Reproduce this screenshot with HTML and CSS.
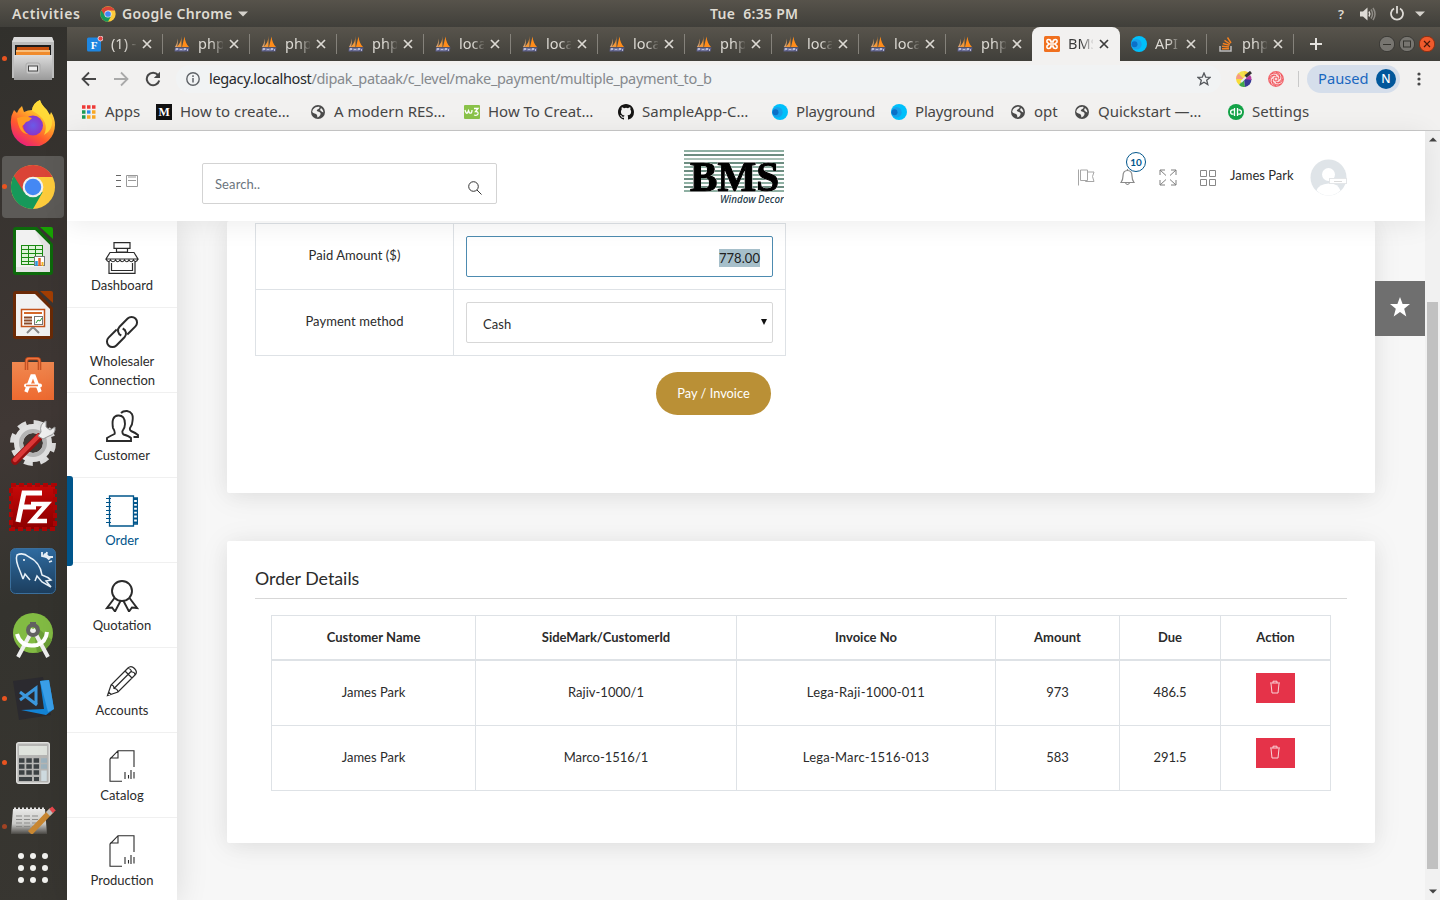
FILE: index.html
```html
<!DOCTYPE html>
<html lang="en">
<head>
<meta charset="utf-8">
<title>BMS Window Decor</title>
<link rel="stylesheet" href="styles.css">
</head>
<body>
<svg class="defs" width="0" height="0">
  <defs>
    <linearGradient id="gGray" x1="0" y1="0" x2="0" y2="1"><stop offset="0" stop-color="#dcdcdc"/><stop offset="1" stop-color="#9a9a9a"/></linearGradient>
    <linearGradient id="gFox" x1=".8" y1="0" x2=".2" y2="1"><stop offset="0" stop-color="#fff14a"/><stop offset=".35" stop-color="#ffb02a"/><stop offset=".65" stop-color="#ff5a2c"/><stop offset="1" stop-color="#e5148a"/></linearGradient>
    <radialGradient id="gGlobe"><stop offset="0" stop-color="#6a5be8"/><stop offset="1" stop-color="#8a35c8"/></radialGradient>
    <linearGradient id="gBag" x1="0" y1="0" x2="0" y2="1"><stop offset="0" stop-color="#f08850"/><stop offset="1" stop-color="#ee6a30"/></linearGradient>
    <linearGradient id="gRed" x1="0" y1="0" x2="0" y2="1"><stop offset="0" stop-color="#c80808"/><stop offset="1" stop-color="#8c0000"/></linearGradient>
    <linearGradient id="gSql" x1="0" y1="0" x2="0" y2="1"><stop offset="0" stop-color="#2f6ba0"/><stop offset="1" stop-color="#1c3e5e"/></linearGradient>
    <linearGradient id="gFade" x1="0" y1="0" x2="0" y2="1"><stop offset="0" stop-color="#e8e8e6"/><stop offset=".6" stop-color="#c8c8c6"/><stop offset="1" stop-color="#4a4844"/></linearGradient>
  </defs>
  <symbol id="sails" viewBox="0 0 16 16">
    <path d="M7.500 0 C7.500 4 6 8 2.500 11 H7.500 Z" fill="#f0973a"/><path d="M3.500 2.500 C3.500 6 2.500 9 .8 11 H3 C4 8 4 5 3.500 2.500Z" fill="#d9a06a"/>
    <path d="M10.500 .5 L8 11 H15 C12.500 8.500 11 5 10.500 .5Z" fill="#ff8c1a"/>
    <path d="M1 11.500 H15.500 L14.500 15.500 H.5Z" fill="#5c5f8c"/><path d="M2 14.500 V12.500 H4 V13.500 H2 M6 12.500 V14.500 M8 12.500 V14.500 M6 13.500 H8 M10 14.500 V12.500 H12 V13.500 H10 M13.500 15 V13" fill="none" stroke="#c9cbe0" stroke-width=".8"/>
  </symbol>
  <symbol id="chrome" viewBox="0 0 48 48">
    <circle cx="24" cy="24" r="23" fill="#fdcb3c"/>
    <path d="M24 24 L4 12.600 A23 23 0 0 0 24 47 L34 29.500Z" fill="#16995a"/>
    <path d="M4 12.600 A23 23 0 0 1 44.300 13.500 H24 A10.500 10.500 0 0 0 14 21 L14.500 29.500Z" fill="#da4437"/>
    <circle cx="24" cy="24" r="10.800" fill="#f1f1f1"/><circle cx="24" cy="24" r="8.600" fill="#4488f4"/>
  </symbol>
  <symbol id="x" viewBox="0 0 10 10"><path d="M1 1 9 9 M9 1 1 9" fill="none" stroke="currentColor" stroke-width="1.700"/></symbol>
  <symbol id="globe" viewBox="0 0 16 16"><circle cx="8" cy="8" r="7" fill="#4b4b4b"/><path d="M3 5.500 C5 3 8 2.500 9.500 3 C10 4.500 8 5 7 6 C6 7.500 9.500 7.500 10.500 9 C11 11 9 13 7.500 13.500 C7 12 7.500 11 6 10 C4 9 2.500 9 2.200 7.500Z M11 4 C12.500 5 13.500 7 13.300 8.500 C12 8 11 7 10 6Z" fill="#f2f1f0"/></symbol>
  <symbol id="play" viewBox="0 0 16 16"><circle cx="8" cy="8" r="8" fill="#00c0fb"/><circle cx="5.500" cy="8.300" r="5.200" fill="#18a0ea"/><circle cx="3.500" cy="8.300" r="3" fill="#0b70c8"/></symbol>
  <symbol id="doc" viewBox="0 0 32 32"><path d="M28 17 V.7 H12 L4 9 V31.300 H16 M12 .7 V8 H4 M19 22 V29 M22.500 25 V28.500 M25 20 V29 M28 22 V28.500" fill="none" stroke="currentColor" stroke-width="1.100"/></symbol>
  <symbol id="trash" viewBox="0 0 12 14"><path d="M1 3 H11 M4 3 V1.200 H8 V3 M2 3.500 L3 13 H9 L10 3.500" fill="none" stroke="#f9d3d8" stroke-width="1"/></symbol>
</svg>

<header class="topbar">
  <span class="activities">Activities</span>
  <svg class="tb-chrome" width="16" height="16"><use href="#chrome"/></svg>
  <span class="appname">Google Chrome</span>
  <svg class="caret" width="10" height="6"><path d="M0 .5H10L5 5.500Z" fill="#d5d2cc"/></svg>
  <span class="clock">Tue&nbsp; 6:35 PM</span>
  <div class="tray">
    <span class="tray-help">?</span>
    <svg width="16" height="14" viewBox="0 0 16 14"><path d="M0 4.500H3L7.500 .5V13.500L3 9.500H0Z" fill="#dedbd6"/><path d="M9 4.500Q10.500 7 9 9.500" stroke="#dedbd6" stroke-width="1.500" fill="none"/><path d="M11 2.500Q14 7 11 11.500M13 1Q17 7 13 13" stroke="#8f8c86" stroke-width="1.500" fill="none"/></svg>
    <svg width="14" height="15" viewBox="0 0 14 15"><path d="M4 2.500A6 6 0 1 0 10 2.500M7 0V7.500" stroke="#dedbd6" stroke-width="1.800" fill="none"/></svg>
    <svg width="10" height="6"><path d="M0 .5H10L5 5.500Z" fill="#d5d2cc"/></svg>
  </div>
</header>

<div class="desktop">
<nav class="dock">
  <div class="dk run"><svg width="42" height="44" viewBox="0 0 42 44"><path d="M2 0H40L42 5V41H0V5Z" fill="#bdbdbd"/><path d="M2 0H40L42 5H0Z" fill="#dadada"/><rect x="3" y="8" width="36" height="11" fill="#1d1d1d"/><path d="M5 10H37V19H4Z" fill="#c8500d"/><path d="M4 13H38V19H4Z" fill="#f08b2c"/><path d="M4 14H38" stroke="#fff0c8"/><rect x="2" y="18" width="38" height="25" fill="url(#gGray)"/><rect x="14" y="26" width="14" height="11" rx="2" fill="#c9c9c9" stroke="#aaa"/><rect x="16.500" y="29" width="9" height="5" fill="#eee" stroke="#444"/></svg></div>
  <div class="dk"><svg width="46" height="46" viewBox="0 0 46 46"><path d="M4 10L7 13Q8 9 12 6L14 12Q18 10 22 10Q23 3 30 0Q31 4 36 9L40 15L41 12Q45 18 45 25A22 22 0 0 1 1 25Q0 17 4 10Z" fill="url(#gFox)"/><path d="M30 0Q31 5 37 10L42 20Q43 30 34 35Q40 22 26 13Q21 10 22 10Q23 3 30 0Z" fill="#ffdd38" opacity=".85"/><circle cx="23" cy="25.500" r="10" fill="url(#gGlobe)"/><path d="M7 18Q15 15 22 18Q20 21 16 22Q14 25 12 26Q13 31 18 34Q9 34 7 18Z" fill="#ff9b22"/></svg></div>
  <div class="dk run active"><svg width="46" height="46"><use href="#chrome"/></svg></div>
  <div class="dk"><svg width="40" height="48" viewBox="0 0 40 48"><path d="M3 0H24L40 17V45Q40 48 37 48H3Q0 48 0 45V3Q0 0 3 0Z" fill="#0d6a0b"/><path d="M27 0H38Q40 0 40 2V12Z" fill="#18a303"/><path d="M3 3H22L37 18V45H3Z" fill="#f1f1f1"/><path d="M22 3L37 18V45H3V40H30V20Z" fill="#dcdcdc" opacity=".6"/><rect x="8.500" y="18.500" width="21" height="19" fill="#dff3da" stroke="#1a8a12"/><path d="M8 22.500H30M8 26.500H30M8 30.500H30M8 34.500H30M15.500 18V38M22.500 18V38" stroke="#1a8a12"/><rect x="21.500" y="29.500" width="10" height="9" fill="#fff" stroke="#777"/><path d="M23.500 34V39" stroke="#2d96d8" stroke-width="2.500"/><path d="M26.500 31V39" stroke="#e8622a" stroke-width="2.500"/><path d="M29.500 35V39" stroke="#f3b52a" stroke-width="2"/></svg></div>
  <div class="dk"><svg width="40" height="48" viewBox="0 0 40 48"><path d="M3 0H24L40 17V45Q40 48 37 48H3Q0 48 0 45V3Q0 0 3 0Z" fill="#6b2a06"/><path d="M27 0H38Q40 0 40 2V12Z" fill="#a33e03"/><path d="M3 3H22L37 18V45H3Z" fill="#f1f1f1"/><rect x="8.500" y="18.500" width="23" height="17" fill="#fff" stroke="#c2521a" stroke-width="1.500"/><path d="M11 22H29" stroke="#d4682a" stroke-width="2"/><path d="M11 26.500H19M11 29.500H19M11 32.500H19" stroke="#8a4a2a" stroke-width="2"/><rect x="21.500" y="25.500" width="8" height="8" fill="#fff" stroke="#777"/><path d="M23 32L25 29L27 30L29 27" fill="none" stroke="#2b9b35"/><path d="M14 42L19 37H21L26 42" fill="none" stroke="#888" stroke-width="2"/></svg></div>
  <div class="dk"><svg width="42" height="44" viewBox="0 0 42 44"><rect x="0" y="5" width="42" height="38" fill="url(#gBag)"/><path d="M14.500 13V4Q14.500 1.500 17 1.500H25Q27.500 1.500 27.500 4V13" fill="none" stroke="#b8491b" stroke-width="3.500"/><path d="M14.500 13V4Q14.500 1.500 17 1.500H25Q27.500 1.500 27.500 4V13" fill="none" stroke="#ee7440" stroke-width="1.500"/><path d="M14 35L20 19H22L28 35" fill="none" stroke="#fff" stroke-width="3.600"/><rect x="12" y="26.500" width="18" height="4" rx="2" fill="#fff"/><path d="M14 28.500H26" stroke="#f07a40" stroke-width="1.600"/></svg></div>
  <div class="dk"><svg width="46" height="46" viewBox="0 0 46 46"><circle cx="23" cy="23" r="20" fill="none" stroke="#dcdcdc" stroke-width="6" stroke-dasharray="8.500 7.210"/><circle cx="23" cy="23" r="14.500" fill="none" stroke="#e0e0e0" stroke-width="9"/><circle cx="23" cy="23" r="12" fill="none" stroke="#b4b4b4" stroke-width="4"/><path d="M5 41L29 17" stroke="#941010" stroke-width="7.500" stroke-linecap="round"/><path d="M5 40L28 16.500" stroke="#dc3838" stroke-width="4.500" stroke-linecap="round"/><path d="M28 16L31 12Q29 4 36 1L36 7L40 10L45 7Q46 14 39 16L33 19Z" fill="#f0f0f0" stroke="#999"/></svg></div>
  <div class="dk"><svg width="48" height="48" viewBox="0 0 48 48"><rect x="2" y="2" width="44" height="44" fill="url(#gRed)" stroke="#ae0505" stroke-width="4" stroke-dasharray="5 3"/><path d="M9 39L15 10H33M12 24H27" fill="none" stroke="#fff" stroke-width="5"/><path d="M22 21H38L23 38H38" fill="none" stroke="#fff" stroke-width="4.500"/></svg></div>
  <div class="dk"><svg width="46" height="46" viewBox="0 0 46 46"><rect x=".5" y=".5" width="45" height="45" rx="5" fill="url(#gSql)" stroke="#3b6f9c"/><path d="M13 31L10 23Q5 12 7 7Q13 4 19 9Q30 14 32 27Q38 29 41 32L36 33L41 39L32 34L27 28L25 33M13 31L15 26L20 32" fill="none" stroke="#e8f1f8" stroke-width="1.500"/><circle cx="14" cy="12" r="1" fill="#fff"/><path d="M34 6L40 11" stroke="#e8f1f8" stroke-width="3.500"/><path d="M32 4V8L36 9L37 4M38 9L43 9M39 14L42 13" stroke="#e8f1f8" stroke-width="1.800" fill="none"/></svg></div>
  <div class="dk"><svg width="42" height="46" viewBox="0 0 42 46"><circle cx="21" cy="21" r="20" fill="#82bb43"/><path d="M21 12L40 28A20 20 0 0 1 25 41Z" fill="#6b9f36"/><path d="M21 17L6 45M21 17L36 45" stroke="#eee" stroke-width="4"/><path d="M5 22Q9 36 25 33Q34 30 35 20" fill="none" stroke="#fff" stroke-width="4"/><circle cx="21" cy="18" r="5" fill="none" stroke="#616161" stroke-width="4"/><path d="M18 10H24V13H18Z" fill="#616161"/></svg></div>
  <div class="dk run"><svg width="42" height="46" viewBox="0 0 42 46"><path d="M1 5L31 1L39 39L7 44Z" fill="#2b2a2f"/><path d="M28 5L37 4L42 33L34 39L9 34L32 33Z" fill="#1384d6"/><path d="M28 5L37 4L42 33L36 36Z" fill="#3aa0ea"/><path d="M8 16L25 29M8 24L24 12V28" fill="none" stroke="#3b97dd" stroke-width="3"/></svg></div>
  <div class="dk run"><svg width="34" height="42" viewBox="0 0 34 42"><rect x=".7" y=".7" width="32.600" height="40.600" rx="2" fill="#b6b6b4" stroke="#e1e1df" stroke-width="1.400"/><rect x="3" y="4" width="28" height="9" fill="#dfe3dd"/><path d="M3 18.500H24M3 24.500H24M3 30.500H24" stroke="#3d4244" stroke-width="4.500" stroke-dasharray="5.500 1.800"/><path d="M3 37H16M18 37H23" stroke="#3d4244" stroke-width="4"/><path d="M25 18.500H31M25 24.500H31" stroke="#9db2bd" stroke-width="4.500"/><path d="M28 28.500V39" stroke="#cfdbe0" stroke-width="5.500"/></svg></div>
  <div class="dk run half"><svg width="46" height="28" viewBox="0 0 46 28"><path d="M3 3H35L37 28H1Z" fill="url(#gFade)"/><path d="M5 5V1.500M9 5V1.500M13 5V1.500M17 5V1.500M21 5V1.500M25 5V1.500M29 5V1.500M33 5V1.500" stroke="#e6e6e6" stroke-width="2"/><path d="M6 10H30M6 13.500H30M6 17H28M6 20.500H25" stroke="#8b8b89" stroke-dasharray="6 2"/><path d="M20 27L41 5" stroke="#c88732" stroke-width="5.500"/><path d="M38 8L42 4" stroke="#c0c0c0" stroke-width="5.500"/><path d="M41 5L44 2.500" stroke="#e9484d" stroke-width="5.500"/></svg></div>
  <div class="apps"><i></i><i></i><i></i><i></i><i></i><i></i><i></i><i></i><i></i></div>
</nav>

<section class="browser">
  <div class="tabs">
    <div class="tab"><svg width="16" height="16" viewBox="0 0 16 16"><rect x="0" y="1.500" width="14" height="14" rx="1.500" fill="#1e86e0"/><circle cx="13.500" cy="2.500" r="2.500" fill="#e64545" stroke="#fff" stroke-width=".7"/><text class="f-letter" x="3.800" y="12.500">F</text></svg><span>(1) -</span><svg class="tx" width="10" height="10"><use href="#x"/></svg></div>
    <div class="tab"><svg width="16" height="16"><use href="#sails"/></svg><span>php</span><svg class="tx" width="10" height="10"><use href="#x"/></svg></div>
    <div class="tab"><svg width="16" height="16"><use href="#sails"/></svg><span>php</span><svg class="tx" width="10" height="10"><use href="#x"/></svg></div>
    <div class="tab"><svg width="16" height="16"><use href="#sails"/></svg><span>php</span><svg class="tx" width="10" height="10"><use href="#x"/></svg></div>
    <div class="tab"><svg width="16" height="16"><use href="#sails"/></svg><span>loca</span><svg class="tx" width="10" height="10"><use href="#x"/></svg></div>
    <div class="tab"><svg width="16" height="16"><use href="#sails"/></svg><span>loca</span><svg class="tx" width="10" height="10"><use href="#x"/></svg></div>
    <div class="tab"><svg width="16" height="16"><use href="#sails"/></svg><span>loca</span><svg class="tx" width="10" height="10"><use href="#x"/></svg></div>
    <div class="tab"><svg width="16" height="16"><use href="#sails"/></svg><span>php</span><svg class="tx" width="10" height="10"><use href="#x"/></svg></div>
    <div class="tab"><svg width="16" height="16"><use href="#sails"/></svg><span>loca</span><svg class="tx" width="10" height="10"><use href="#x"/></svg></div>
    <div class="tab"><svg width="16" height="16"><use href="#sails"/></svg><span>loca</span><svg class="tx" width="10" height="10"><use href="#x"/></svg></div>
    <div class="tab nosep"><svg width="16" height="16"><use href="#sails"/></svg><span>php</span><svg class="tx" width="10" height="10"><use href="#x"/></svg></div>
    <div class="tab on"><svg width="16" height="16" viewBox="0 0 16 16"><rect width="16" height="16" rx="1.500" fill="#f0701f"/><path d="M4.500 3.500Q2.500 3.500 3 6L5 8L3 10Q2.500 12.500 4.500 12.500Q7 12.500 7 10H9Q9 12.500 11.500 12.500Q13.500 12.500 13 10L11 8L13 6Q13.500 3.500 11.500 3.500Q9 3.500 9 6H7Q7 3.500 4.500 3.500ZM5.500 8H10.500" fill="none" stroke="#fff" stroke-width="1.600"/></svg><span>BMS</span><svg class="tx" width="10" height="10"><use href="#x"/></svg></div>
    <div class="tab"><svg width="16" height="16"><use href="#play"/></svg><span>API</span><svg class="tx" width="10" height="10"><use href="#x"/></svg></div>
    <div class="tab"><svg width="16" height="16" viewBox="0 0 16 16"><path d="M2 10V15H13V10" fill="none" stroke="#bcbbbb" stroke-width="1.500"/><path d="M4 12.700H11M4 10.300L11 11M4.800 7.500L11.500 9.300M6.500 4.300L12 8M9.500 1.500L13 7" stroke="#f4801f" stroke-width="1.400"/></svg><span>php</span><svg class="tx" width="10" height="10"><use href="#x"/></svg></div>
    <svg class="newtab" width="12" height="12"><path d="M6 0V12M0 6H12" stroke="#e4e2de" stroke-width="2"/></svg>
    <div class="winbtns">
      <svg width="16" height="16"><circle cx="8" cy="8" r="7.700" fill="#777570" stroke="#3a3935"/><path d="M4 8.500H12" stroke="#35342f"/></svg>
      <svg width="16" height="16"><circle cx="8" cy="8" r="7.700" fill="#777570" stroke="#3a3935"/><rect x="4.500" y="5" width="7" height="6" fill="none" stroke="#35342f"/></svg>
      <svg width="16" height="16"><circle cx="8" cy="8" r="7.700" fill="#f05a2c" stroke="#8a2f12"/><path d="M5 5L11 11M11 5L5 11" stroke="#48180a" stroke-width="1.200"/></svg>
    </div>
  </div>

  <div class="toolbar">
    <svg class="nav-ic" width="16" height="16" viewBox="0 0 16 16"><path d="M15 8H2M8 1.500L1.500 8L8 14.500" fill="none" stroke="#474747" stroke-width="1.800"/></svg>
    <svg class="nav-ic" width="16" height="16" viewBox="0 0 16 16"><path d="M1 8H14M8 1.500L14.500 8L8 14.500" fill="none" stroke="#a9a9a9" stroke-width="1.800"/></svg>
    <svg class="nav-ic" width="16" height="16" viewBox="0 0 16 16"><path d="M13 4A6.300 6.300 0 1 0 14.200 9.500" fill="none" stroke="#474747" stroke-width="2"/><path d="M15 .8V7H8.800Z" fill="#474747"/></svg>
    <div class="omnibox">
      <svg width="14" height="14" viewBox="0 0 14 14"><circle cx="7" cy="7" r="6.200" fill="none" stroke="#5f6368" stroke-width="1.400"/><path d="M7 6V10.500M7 3.300V4.900" stroke="#5f6368" stroke-width="1.500"/></svg>
      <div class="url"><b>legacy.localhost</b>/dipak_pataak/c_level/make_payment/multiple_payment_to_b</div>
      <svg class="fav" width="14" height="14" viewBox="0 0 14 14"><path d="M7 1L8.700 5.100L13 5.400L9.700 8.200L10.800 12.600L7 10.200L3.200 12.600L4.300 8.200L1 5.400L5.300 5.100Z" fill="none" stroke="#55585c" stroke-width="1.300"/></svg>
    </div>
    <svg class="ext1" width="18" height="16" viewBox="0 0 18 16"><path d="M8 8V0A8 8 0 0 0 0 8Z" fill="#f2e04a"/><path d="M8 8L2.500 2.500A8 8 0 0 0 0 8Z" fill="#f79b83"/><path d="M8 8H0A8 8 0 0 0 3 14Z" fill="#f9dc37"/><path d="M8 8L3 14A8 8 0 0 0 9 16Z" fill="#3eaa4b"/><path d="M8 8L9 16A8 8 0 0 0 15.500 8Z" fill="#3a3996"/><path d="M8 8V0Q12 0 14 4Z" fill="#f7d23d"/><path d="M8 8L14 4Q16 6 15.500 9Z" fill="#b33aa0"/><path d="M5 11L12 4" stroke="#ececec" stroke-width="2"/><path d="M9.500 5.500L15 1" stroke="#333" stroke-width="3"/></svg>
    <svg class="ext2" width="16" height="16" viewBox="0 0 16 16"><circle cx="8" cy="8" r="7.300" fill="#fbd6d7" stroke="#f26a70" stroke-width="1.300"/><circle cx="8" cy="8" r="2" fill="none" stroke="#f0555c"/><path d="M8 1Q13 3 11.500 8M15 8Q13 13 8 11.500M8 15Q3 13 4.500 8M1 8Q3 3 8 4.500M3 3Q9 0 12 6M13 3Q16 9 10 12M13 13Q7 16 4 10M3 13Q0 7 6 4" fill="none" stroke="#f0555c"/></svg>
    <i class="tsep"></i>
    <div class="profile"><span>Paused</span><b>N</b></div>
    <svg class="dots" width="4" height="14"><circle cx="2" cy="2" r="1.600" fill="#474747"/><circle cx="2" cy="7" r="1.600" fill="#474747"/><circle cx="2" cy="12" r="1.600" fill="#474747"/></svg>
  </div>

  <div class="bookmarks">
    <div class="bm w75"><svg width="16" height="16" viewBox="0 0 16 16"><path d="M1 3H4.500M6 3H9.500M11 3H14.500" stroke="#ee3a36" stroke-width="3.300"/><path d="M1 8H4.500M1 13H4.500" stroke="#1d9b57" stroke-width="3.300"/><path d="M6 8H9.500" stroke="#2a8cf0" stroke-width="3.300"/><path d="M11 8H14.500M6 13H9.500M11 13H14.500" stroke="#f9a825" stroke-width="3.300"/></svg><span>Apps</span></div>
    <div class="bm"><svg width="16" height="16" viewBox="0 0 16 16"><rect width="16" height="16" fill="#111"/><text class="m-letter" x="2.400" y="12">M</text></svg><span>How to create…</span></div>
    <div class="bm"><svg width="16" height="16"><use href="#globe"/></svg><span>A modern RES…</span></div>
    <div class="bm"><svg width="16" height="16" viewBox="0 0 16 16"><rect y="1" width="16" height="14" rx="1" fill="#8ac249"/><path d="M1 6Q2 10 3.500 9L4.500 6.500L5.500 9Q8 10 8 6M10 4.500H14L11.500 7.500Q14.500 7.500 14 10Q13 12 10 11" fill="none" stroke="#fff" stroke-width="1.300"/></svg><span>How To Creat…</span></div>
    <div class="bm"><svg width="16" height="16" viewBox="0 0 16 16"><path fill="#161514" d="M8 0C3.580 0 0 3.580 0 8c0 3.540 2.290 6.530 5.470 7.590.4.070.55-.17.55-.38 0-.19-.01-.82-.01-1.490-2.010.37-2.530-.49-2.690-.94-.09-.23-.48-.94-.82-1.130-.28-.15-.68-.52-.01-.53.63-.01 1.080.58 1.230.82.72 1.210 1.870.87 2.330.66.07-.52.28-.87.51-1.070-1.780-.2-3.640-.89-3.640-3.950 0-.87.31-1.590.82-2.150-.08-.2-.36-1.020.08-2.120 0 0 .67-.21 2.200.82a7.600 7.600 0 0 1 4 0c1.530-1.040 2.200-.82 2.200-.82.44 1.100.16 1.920.08 2.120.51.56.82 1.270.82 2.150 0 3.070-1.870 3.750-3.650 3.950.29.25.54.73.54 1.480 0 1.070-.01 1.930-.01 2.200 0 .21.15.46.55.38A8 8 0 0 0 16 8c0-4.420-3.580-8-8-8Z"/></svg><span>SampleApp-C…</span></div>
    <div class="bm w119"><svg width="16" height="16"><use href="#play"/></svg><span>Playground</span></div>
    <div class="bm w119"><svg width="16" height="16"><use href="#play"/></svg><span>Playground</span></div>
    <div class="bm w64"><svg width="16" height="16"><use href="#globe"/></svg><span>opt</span></div>
    <div class="bm"><svg width="16" height="16"><use href="#globe"/></svg><span>Quickstart —…</span></div>
    <div class="bm"><svg width="16" height="16" viewBox="0 0 16 16"><circle cx="8" cy="8" r="8" fill="#13a347"/><path d="M6.500 4V12M9.500 4V12M6.500 5.800H4.800A2.200 2.200 0 0 0 4.800 10.200H5.500M9.500 10.200H11.200A2.200 2.200 0 0 0 11.200 5.800H10.500" fill="none" stroke="#fff" stroke-width="1.300"/></svg><span>Settings</span></div>
  </div>

  <div class="viewport">
    <div class="page">
      <header class="site-head">
        <svg class="toggle" width="23" height="14" viewBox="0 0 23 14"><path d="M0 1.500H5M2 6.500H5M0 12.500H5" stroke="#666"/><path d="M0 6.500H4" stroke="#666"/><path d="M10.500 1.500H21.500V12.500H10.500ZM12 6.500H20M12 3H20" fill="none" stroke="#9a9a9a"/></svg>
        <div class="search"><span>Search..</span><svg width="14" height="14" viewBox="0 0 14 14"><circle cx="5.500" cy="5.500" r="4.800" fill="none" stroke="#333"/><path d="M9 9L13.500 13.500" stroke="#333"/></svg></div>
        <svg class="logo" width="100" height="56" viewBox="0 0 100 56">
          <path d="M0 1H100M0 17H100M0 25H100M0 33H100M0 41H100" stroke="#8fb0a3" stroke-width="1.800"/>
          <path d="M0 5H100M0 13H100M0 21H100M0 29H100M0 37H100" stroke="#6d8d81" stroke-width="1.900"/>
          <path d="M0 9H100" stroke="#a9c0b6" stroke-width="2"/>
          <text class="logo-bms" x="6" y="41" textLength="89" lengthAdjust="spacingAndGlyphs">BMS</text>
          <text class="logo-sub" x="36" y="53" textLength="64" lengthAdjust="spacingAndGlyphs">Window Decor</text>
        </svg>
        <div class="head-icons">
          <svg width="17" height="17" viewBox="0 0 17 17"><path d="M.5 .5V16.500M2.500 1H9.500V11.500H2.500ZM9.500 3H16L14.500 7.500L16 12.500H7.500V11.500" fill="none" stroke="#a6a6a6"/></svg>
          <div class="bell"><svg width="15" height="17" viewBox="0 0 15 17"><path d="M1 13.500Q3 11 3 7Q3 1.500 7.500 1.500T12 7Q12 11 14 13.500ZM5.500 14Q7.500 17 9.500 14M7.500 0V1.500" fill="none" stroke="#8a8a8a" stroke-width="1.200"/></svg><b>10</b></div>
          <svg class="expand" width="18" height="17" viewBox="0 0 18 17"><path d="M1 6V1H6M1 1L7 6.500M12 1H17V6M17 1L11 6.500M1 11V16H6M1 16L7 10.500M17 11V16H12M17 16L11 10.500" fill="none" stroke="#7f7f7f"/></svg>
          <svg width="16" height="16" viewBox="0 0 16 16"><path d="M.5 .5H6.500V6.500H.5ZM9.500 .5H15.500V6.500H9.500ZM.5 9.500H6.500V15.500H.5ZM9.500 9.500H15.500V15.500H9.500Z" fill="none" stroke="#888"/></svg>
        </div>
        <span class="user">James Park</span>
        <svg class="avatar" width="37" height="37" viewBox="0 0 37 37"><circle cx="18.500" cy="18.500" r="18" fill="#dfe4e8"/><circle cx="18.500" cy="15.500" r="6.500" fill="#fff"/><path d="M6.500 31.500Q9 25 18.500 24.500T30.500 31.500Q25 36.500 18.500 36.500T6.500 31.500Z" fill="#fff"/><rect x="19.500" y="19.500" width="17" height="5" fill="#fff" stroke="#e4e6e8"/><path d="M24 22.500H32" stroke="#ccc" stroke-width=".7"/></svg>
      </header>

      <div class="body">
        <aside class="side">
          <a class="first"><svg width="34" height="32" viewBox="0 0 34 32"><path d="M9 .7H25V6.300H9ZM11.500 6.300V10H22.500V6.300M5 10.500H29L33 17H1ZM4 19V31.300H30V19M6.500 21V28.500H27.500V21M1 17Q3.300 21.500 5.500 18Q8 21.500 10.500 18Q12.500 21.500 15 18Q17 21.500 19.500 18Q22 21.500 24 18Q26.500 21.500 28.500 18Q31 21.500 33 17" fill="none" stroke="currentColor" stroke-width="1.200"/></svg><span>Dashboard</span></a>
          <a><svg class="link" width="32" height="32" viewBox="0 0 32 32"><g transform="rotate(-45 16 16)" fill="none" stroke="currentColor" stroke-width="2"><path d="M14 10.500H2.500A5.500 5.500 0 0 0 2.500 21.500H14A5.500 5.500 0 0 0 19 14"/><path d="M18 21.500H29.500A5.500 5.500 0 0 0 29.500 10.500H18A5.500 5.500 0 0 0 13 18"/></g></svg><span>Wholesaler<br>Connection</span></a>
          <a><svg width="34" height="32" viewBox="0 0 34 32"><path d="M2 31V28Q5 26 9.500 24Q10.500 22 8 18Q6 6 13 5.500T20 14Q20 18 17.500 21Q17 23 18.500 24.500Q24 26 26 28V31ZM16 3Q18 .8 22 1Q29 2 27.500 11Q27.500 15 25 18Q24.500 20 26 21Q31 23 33 25V27H28.500" fill="none" stroke="currentColor" stroke-width="1.900"/></svg><span>Customer</span></a>
          <a class="sel"><svg width="32" height="32" viewBox="0 0 32 32"><path d="M3.500 1H27.500V31H3.500ZM27.500 3H31.500V29H27.500" fill="none" stroke="currentColor" stroke-width="1.300"/><path d="M29.500 3V29" stroke="currentColor" stroke-width="3" stroke-dasharray="2 1.900"/><path d="M2.500 3V30" stroke="currentColor" stroke-width="5" stroke-dasharray="1 3"/></svg><span>Order</span></a>
          <a><svg width="34" height="32" viewBox="0 0 34 32"><circle cx="17" cy="11" r="10" fill="none" stroke="currentColor" stroke-width="1.900"/><path d="M9.500 18L2 28L7 27.500L10 31.500L15.500 21M24.500 18L32 28L27 27.500L24 31.500L18.500 21" fill="none" stroke="currentColor" stroke-width="1.900"/></svg><span>Quotation</span></a>
          <a><svg width="32" height="32" viewBox="0 0 32 32"><path d="M1.500 30.500L5 20L22 3Q25 0 28.500 3.500T29 10L12 27ZM5 20Q8 20 8 23.500Q11.500 23.500 12 27M8 23.500L25 6.500M19 6L26 13M22 3Q25 4 26 7Q29 7 29 10M2.500 27L5 29.500" fill="none" stroke="currentColor" stroke-width="1.200"/></svg><span>Accounts</span></a>
          <a><svg width="32" height="32"><use href="#doc"/></svg><span>Catalog</span></a>
          <a><svg width="32" height="32"><use href="#doc"/></svg><span>Production</span></a>
        </aside>

        <main class="main">
          <section class="card pay-card">
            <table class="grid pay">
              <tr><td>Paid Amount ($)</td><td class="fc"><div class="field focus"><mark>778.00</mark></div></td></tr>
              <tr><td>Payment method</td><td class="fc"><div class="field select"><span>Cash</span><svg width="6" height="6"><path d="M0 0H6L3 6Z" fill="#111"/></svg></div></td></tr>
            </table>
            <button class="paybtn">Pay / Invoice</button>
          </section>
          <section class="card order-card">
            <h2>Order Details</h2>
            <table class="grid orders">
              <colgroup><col class="c1"><col class="c2"><col class="c3"><col class="c4"><col class="c5"><col class="c6"></colgroup>
              <tr><th>Customer Name</th><th>SideMark/CustomerId</th><th>Invoice No</th><th>Amount</th><th>Due</th><th>Action</th></tr>
              <tr><td>James Park</td><td>Rajiv-1000/1</td><td class="inv">Lega-Raji-1000-011</td><td>973</td><td>486.5</td><td class="act"><button class="del"><svg width="12" height="14"><use href="#trash"/></svg></button></td></tr>
              <tr><td>James Park</td><td>Marco-1516/1</td><td class="inv">Lega-Marc-1516-013</td><td>583</td><td>291.5</td><td class="act"><button class="del"><svg width="12" height="14"><use href="#trash"/></svg></button></td></tr>
            </table>
          </section>
        </main>
      </div>
      <div class="starbox"><svg width="22" height="20" viewBox="0 0 22 20"><path d="M11 0L13.600 7H21L15.200 11.800L17.300 19.500L11 15L4.700 19.500L6.800 11.800L1 7H8.400Z" fill="#fff"/></svg></div>
    </div>
    <div class="scroll"><svg width="8" height="5"><path d="M0 4.500L4 .5L8 4.500Z" fill="#444"/></svg><i></i><svg width="8" height="5"><path d="M0 .5L4 4.500L8 .5Z" fill="#444"/></svg></div>
  </div>
</section>
</div>
</body>
</html>
```
FILE: styles.css
```css
* { box-sizing: border-box; }
body { margin: 0; width: 1440px; height: 900px; overflow: hidden; display: flex; flex-direction: column; font-family: "Noto Sans", "Open Sans", sans-serif; font-size: 15px; }
svg { display: block; flex: none; }
.defs { position: absolute; }

/* GNOME top bar */
.topbar { position: relative; height: 27px; flex: none; display: flex; align-items: center; padding-left: 12px; background: linear-gradient(#57534b, #403f3a); color: #dfdbd2; font-size: 14px; font-weight: 600; white-space: nowrap; }
.topbar > span { margin-top: -1px; }
.activities { width: 68px; letter-spacing: .6px; }
.topbar .tb-chrome { margin-left: 20px; }
.topbar .appname { width: 111px; margin-left: 6px; letter-spacing: .35px; }
.caret { margin-left: 5px; }
.clock { position: absolute; left: 710px; letter-spacing: .3px; }
.tray { margin-left: auto; display: flex; align-items: center; padding-right: 15px; }
.tray svg { margin-left: 16px; }
.tray svg:nth-of-type(2) { margin-left: 14px; }
.tray svg:nth-of-type(3) { margin-left: 11px; }
.tray-help { font-size: 13px; }

.desktop { flex: 1; display: flex; min-height: 0; }

/* launcher */
.dock { width: 67px; flex: none; background: linear-gradient(160deg, #31302c, #403835 45%, #34332e 65%, #383631); display: flex; flex-direction: column; align-items: center; }
.dk { position: relative; width: 62px; height: 64px; flex: none; display: flex; align-items: center; justify-content: center; margin-right: 1px; }
.dk.half { height: 40px; align-items: flex-end; padding-bottom: 1px; }
.dk.active { height: 62px; margin: 1px 1px 1px 0; background: #5c5a57; border-radius: 4px; }
.dk.run::before { content: ""; position: absolute; left: 0; top: 50%; margin-top: -3px; width: 5px; height: 5px; border-radius: 50%; background: #e95420; }
.dk.half.run::before { top: 32px; background: #a04324; }
.apps { display: grid; grid-template-columns: repeat(3, 6px); gap: 6px; margin-top: 18px; margin-right: 1px; }
.apps i { width: 6px; height: 6px; border-radius: 50%; background: #f2f2ef; }

/* browser chrome */
.browser { flex: 1; min-width: 0; display: flex; flex-direction: column; background: #f2f1f0; }
.tabs { height: 34px; flex: none; display: flex; align-items: center; padding-left: 8px; background: linear-gradient(#58544c, #403f3a); }
.tab { width: 87px; height: 34px; flex: none; position: relative; display: flex; align-items: center; padding-left: 12px; color: #dcd9d3; }
.tab::after { content: ""; position: absolute; right: -1px; top: 7px; width: 1px; height: 20px; background: #85827b; }
.tab.nosep::after, .tab.on::after { display: none; }
.tab span { width: 25px; margin: -2px 0 0 8px; overflow: hidden; white-space: nowrap; font-size: 14.5px; -webkit-mask-image: linear-gradient(90deg, #000 55%, transparent 105%); mask-image: linear-gradient(90deg, #000 55%, transparent 105%); }
.tab .tx { margin-left: 6px; }
.tab.on { width: 88px; margin-right: -1px; background: #f2f1f0; border-radius: 8px 8px 0 0; color: #3c3c3c; }
.f-letter { font: bold 11px "Liberation Serif", serif; fill: #fff; }
.m-letter { font: bold 12px "Liberation Serif", serif; fill: #fff; }
.newtab { margin-left: 17px; }
.winbtns { display: flex; gap: 4px; margin-left: auto; padding-right: 5px; }
.toolbar { height: 35px; flex: none; display: flex; align-items: center; padding: 1px 0 0 14px; }
.nav-ic { margin-right: 16px; }
.omnibox { width: 1045px; flex: none; height: 28px; margin-left: -1px; border-radius: 14px; background: #f1f3f4; display: flex; align-items: center; padding: 0 10px; }
.url { margin: -2px 0 0 9px; color: #85898d; width: 500px; white-space: nowrap; font-size: 14.5px; letter-spacing: -.34px; }
.url b { font-weight: 400; color: #26282a; }
.fav { margin-left: auto; }
.ext1 { margin-left: 15px; }
.ext2 { margin-left: 14px; }
.tsep { width: 1px; height: 16px; margin-left: 14px; background: #c9c9c9; }
.profile { width: 93px; height: 28px; flex: none; margin-left: 8px; border-radius: 14px; background: #d5deeb; display: flex; align-items: center; justify-content: space-between; padding: 0 4px 0 11px; color: #1a67c0; }
.profile span { margin-top: -2px; font-size: 14.7px; }
.profile b { width: 20px; height: 20px; border-radius: 50%; background: #01579b; color: #fff; font-size: 12px; line-height: 20px; text-align: center; font-weight: 500; }
.dots { margin-left: 17px; }
.bookmarks { height: 35px; flex: none; display: flex; align-items: center; padding: 0 0 3px 14px; border-bottom: 1px solid #c8c8c8; color: #474747; }
.bm { width: 154px; flex: none; display: flex; align-items: center; gap: 8px; white-space: nowrap; }
.bm span { margin-top: -2px; }
.w75 { width: 75px; } .w119 { width: 119px; letter-spacing: -.2px; } .w64 { width: 64px; }

/* site */
.viewport { flex: 1; min-height: 0; display: flex; font-family: Lato, "Open Sans", sans-serif; font-size: 13px; color: #2b2b2b; }
.page { position: relative; width: 1358px; display: flex; flex-direction: column; background: #f7f7f7; }
.site-head { position: relative; z-index: 2; height: 90px; flex: none; display: flex; align-items: flex-start; background: #fff; box-shadow: 0 3px 25px rgba(0,0,0,.08); }
.toggle { margin: 43px 0 0 49px; }
.search { width: 295px; height: 41px; margin: 32px 0 0 63px; border: 1px solid #d3d3d3; border-radius: 2px; display: flex; align-items: center; justify-content: space-between; padding: 0 14px 0 12px; color: #6b757d; }
.search span { letter-spacing: .1px; }
.search svg { margin-top: 8px; }
.logo { margin: 19px 0 0 187px; }
.logo-bms { font: bold 43px "Liberation Serif", serif; stroke: #000; stroke-width: 1.2px; filter: drop-shadow(0 0 .7px #fff) drop-shadow(0 0 .7px #fff); }
.logo-sub { font: italic 500 10.5px "Noto Sans", sans-serif; fill: #243c4c; }
.head-icons { display: flex; align-items: center; margin: 38px 0 0 294px; }
.head-icons > svg { margin-right: 24px; }
.head-icons > .expand { margin-right: 23px; }
.head-icons > svg:last-child { margin-right: 0; }
.bell { position: relative; margin: 0 24px 0 1px; }
.bell b { position: absolute; left: 6px; top: -17px; width: 20px; height: 20px; border: 1px solid #00558b; border-radius: 50%; background: #fff; color: #00558b; font-size: 10px; line-height: 18px; text-align: center; }
.user { margin: 36px 0 0 14px; line-height: 16px; width: 65px; white-space: nowrap; }
.avatar { margin: 28px 0 0 15px; }
.body { flex: 1; min-height: 0; display: flex; }
.side { position: relative; width: 110px; flex: none; display: flex; flex-direction: column; background: #fff; box-shadow: 0 3px 30px rgba(0,0,0,.12); padding-top: 2px; overflow: visible; }
.side a { position: relative; height: 85px; flex: none; padding-top: 5px; display: flex; flex-direction: column; align-items: center; justify-content: center; gap: 4px; border-bottom: 1px solid #f0f0f0; line-height: 19px; text-align: center; }
.side .first { gap: 2px; padding-top: 7px; }
.link { overflow: visible; }
.side .sel { color: #00558b; }
.side .sel::before { content: ""; position: absolute; left: 0; top: -2px; width: 6px; height: 90px; border-radius: 0 3px 3px 0; background: #00558b; }
.main { flex: 1; padding: 0 50px; display: flex; flex-direction: column; gap: 48px; }
.card { background: #fff; border-radius: 2px; box-shadow: 0 3px 30px rgba(0,0,0,.08), 0 3px 20px rgba(0,0,0,.04); }
.pay-card { height: 272px; padding: 2px 28px 0; }
.grid { border-collapse: separate; border-spacing: 0; table-layout: fixed; border: 0 solid #dee2e6; border-width: 1px 0 0 1px; text-align: center; }
.grid td, .grid th { border: 0 solid #dee2e6; border-width: 0 1px 1px 0; padding: 0 12px 2px; vertical-align: middle; }
.pay { width: 531px; }
.pay td { width: 198px; height: 66px; padding-bottom: 3px; letter-spacing: .05px; }
.pay .fc { width: 332px; vertical-align: top; padding-top: 12px; padding-bottom: 0; }
.field { height: 41px; border: 1px solid #d7d7d7; border-radius: 2px; display: flex; align-items: center; }
.focus { border-color: #4d8bb0; justify-content: flex-end; padding: 2px 12px 0; }
.focus mark { background: #a6bfca; color: #212121; line-height: 18px; }
.select { justify-content: space-between; padding: 3px 5px 0 16px; }
.select svg { margin-bottom: 5px; }
.paybtn { display: block; width: 115px; height: 43px; margin: 16px 0 0 401px; border: 0; border-radius: 22px; background: #ba9036; color: #fff; font: 12.8px Lato, sans-serif; padding: 0 0 1px; }
.order-card { height: 302px; padding: 0 28px; }
h2 { margin: 0; height: 58px; padding-top: 25px; border-bottom: 1px solid #d7d7d7; font-size: 17.8px; font-weight: 400; line-height: 24px; }
.orders { width: 1060px; margin: 16px 0 0 16px; }
.orders th { height: 45px; border-bottom-width: 2px; }
.orders td { height: 65px; }
.orders .inv { letter-spacing: .22px; }
.orders .act { vertical-align: top; padding-top: 12px; }
.c1 { width: 204px; } .c2 { width: 261px; } .c3 { width: 259px; } .c4 { width: 124px; } .c5 { width: 101px; } .c6 { width: 110px; }
.del { display: flex; align-items: center; justify-content: center; width: 39px; height: 30px; margin: 0 auto; border: 0; padding: 0 1px 2px 0; background: #e53349; }
.starbox { position: absolute; right: 0; top: 150px; z-index: 3; width: 50px; height: 55px; padding-bottom: 3px; display: flex; align-items: center; justify-content: center; background: #6f6f6f; }
.scroll { width: 15px; flex: none; background: #f1f1f1; display: flex; flex-direction: column; align-items: center; padding: 6px 0; }
.scroll i { width: 11px; height: 567px; margin: 160px 0 auto; background: #c1c1c1; }
```
